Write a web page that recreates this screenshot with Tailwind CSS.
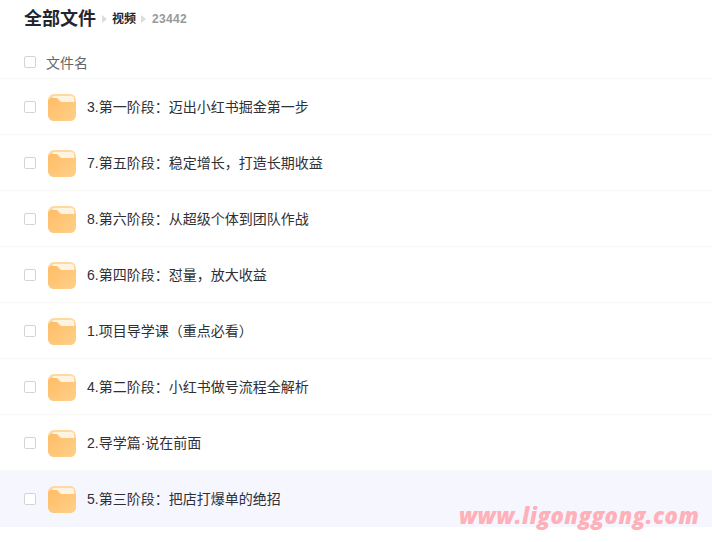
<!DOCTYPE html>
<html lang="zh">
<head>
    <meta charset="UTF-8">
    <title>全部文件</title>
    <script src="https://cdn.jsdelivr.net/npm/@tailwindcss/browser@4"></script>
</head>
<body class="bg-white font-['Liberation_Sans','Noto_Sans_CJK_SC',sans-serif] overflow-hidden">
<div class="relative h-[542px] w-[712px] overflow-hidden">

    <!-- Breadcrumb -->
    <div class="flex h-[37px] items-center pl-[24px]">
        <span class="text-[18px] leading-[24px] font-bold text-[#25262b]">全部文件</span>
        <span class="ml-[6px] mr-[5px] h-0 w-0 border-y-[4px] border-l-[5px] border-y-transparent border-l-[#dcdcdf]"></span>
        <span class="text-[12px] font-bold text-[#25262b]">视频</span>
        <span class="ml-[5px] mr-[5px] h-0 w-0 border-y-[4px] border-l-[5px] border-y-transparent border-l-[#dcdcdf]"></span>
        <span class="ml-[1px] text-[12px] font-bold tracking-[0.3px] text-[#999]">23442</span>
    </div>

    <!-- Table head -->
    <div class="mt-[8px] flex h-[34px] items-center border-b border-[#f7f7f8] pl-[24px]">
        <span class="h-[12px] w-[12px] rounded-[2px] border border-[#d4d4d4] bg-white"></span>
        <span class="ml-[10px] pt-[3px] text-[14px] text-[#666]">文件名</span>
    </div>

    <!-- Rows -->
    <div class="flex h-[56px] items-center border-b border-[#f7f7f8] pl-[24px]">
        <span class="h-[12px] w-[12px] rounded-[2px] border border-[#d4d4d4] bg-white"></span>
        <svg class="ml-[12px]" width="28" height="28" viewBox="0 0 28 28"><defs><linearGradient id="f1" x1="0" y1="0" x2="1" y2="1"><stop offset="0" stop-color="#ffbd66"/><stop offset="1" stop-color="#ffd08a"/></linearGradient></defs><rect y="1" width="28" height="27" rx="6" fill="#ffd89f"/><path d="M5 3h18a3 3 0 0 1 3 3v3H12L9 6H5z" fill="#fff3e2"/><path d="M0 8a4 4 0 0 1 4-3h5l4 4h15v13a6 6 0 0 1-6 6H6a6 6 0 0 1-6-6z" fill="url(#f1)"/></svg>
        <span class="ml-[11px] pt-[1px] text-[14px] text-[#2f3035]">3.第一阶段：迈出小红书掘金第一步</span>
    </div>
    <div class="flex h-[56px] items-center border-b border-[#f7f7f8] pl-[24px]">
        <span class="h-[12px] w-[12px] rounded-[2px] border border-[#d4d4d4] bg-white"></span>
        <svg class="ml-[12px]" width="28" height="28" viewBox="0 0 28 28"><rect y="1" width="28" height="27" rx="6" fill="#ffd89f"/><path d="M5 3h18a3 3 0 0 1 3 3v3H12L9 6H5z" fill="#fff3e2"/><path d="M0 8a4 4 0 0 1 4-3h5l4 4h15v13a6 6 0 0 1-6 6H6a6 6 0 0 1-6-6z" fill="url(#f1)"/></svg>
        <span class="ml-[11px] pt-[1px] text-[14px] text-[#2f3035]">7.第五阶段：稳定增长，打造长期收益</span>
    </div>
    <div class="flex h-[56px] items-center border-b border-[#f7f7f8] pl-[24px]">
        <span class="h-[12px] w-[12px] rounded-[2px] border border-[#d4d4d4] bg-white"></span>
        <svg class="ml-[12px]" width="28" height="28" viewBox="0 0 28 28"><rect y="1" width="28" height="27" rx="6" fill="#ffd89f"/><path d="M5 3h18a3 3 0 0 1 3 3v3H12L9 6H5z" fill="#fff3e2"/><path d="M0 8a4 4 0 0 1 4-3h5l4 4h15v13a6 6 0 0 1-6 6H6a6 6 0 0 1-6-6z" fill="url(#f1)"/></svg>
        <span class="ml-[11px] pt-[1px] text-[14px] text-[#2f3035]">8.第六阶段：从超级个体到团队作战</span>
    </div>
    <div class="flex h-[56px] items-center border-b border-[#f7f7f8] pl-[24px]">
        <span class="h-[12px] w-[12px] rounded-[2px] border border-[#d4d4d4] bg-white"></span>
        <svg class="ml-[12px]" width="28" height="28" viewBox="0 0 28 28"><rect y="1" width="28" height="27" rx="6" fill="#ffd89f"/><path d="M5 3h18a3 3 0 0 1 3 3v3H12L9 6H5z" fill="#fff3e2"/><path d="M0 8a4 4 0 0 1 4-3h5l4 4h15v13a6 6 0 0 1-6 6H6a6 6 0 0 1-6-6z" fill="url(#f1)"/></svg>
        <span class="ml-[11px] pt-[1px] text-[14px] text-[#2f3035]">6.第四阶段：怼量，放大收益</span>
    </div>
    <div class="flex h-[56px] items-center border-b border-[#f7f7f8] pl-[24px]">
        <span class="h-[12px] w-[12px] rounded-[2px] border border-[#d4d4d4] bg-white"></span>
        <svg class="ml-[12px]" width="28" height="28" viewBox="0 0 28 28"><rect y="1" width="28" height="27" rx="6" fill="#ffd89f"/><path d="M5 3h18a3 3 0 0 1 3 3v3H12L9 6H5z" fill="#fff3e2"/><path d="M0 8a4 4 0 0 1 4-3h5l4 4h15v13a6 6 0 0 1-6 6H6a6 6 0 0 1-6-6z" fill="url(#f1)"/></svg>
        <span class="ml-[11px] pt-[1px] text-[14px] text-[#2f3035]">1.项目导学课（重点必看）</span>
    </div>
    <div class="flex h-[56px] items-center border-b border-[#f7f7f8] pl-[24px]">
        <span class="h-[12px] w-[12px] rounded-[2px] border border-[#d4d4d4] bg-white"></span>
        <svg class="ml-[12px]" width="28" height="28" viewBox="0 0 28 28"><rect y="1" width="28" height="27" rx="6" fill="#ffd89f"/><path d="M5 3h18a3 3 0 0 1 3 3v3H12L9 6H5z" fill="#fff3e2"/><path d="M0 8a4 4 0 0 1 4-3h5l4 4h15v13a6 6 0 0 1-6 6H6a6 6 0 0 1-6-6z" fill="url(#f1)"/></svg>
        <span class="ml-[11px] pt-[1px] text-[14px] text-[#2f3035]">4.第二阶段：小红书做号流程全解析</span>
    </div>
    <div class="flex h-[56px] items-center border-b border-[#f7f7f8] pl-[24px]">
        <span class="h-[12px] w-[12px] rounded-[2px] border border-[#d4d4d4] bg-white"></span>
        <svg class="ml-[12px]" width="28" height="28" viewBox="0 0 28 28"><rect y="1" width="28" height="27" rx="6" fill="#ffd89f"/><path d="M5 3h18a3 3 0 0 1 3 3v3H12L9 6H5z" fill="#fff3e2"/><path d="M0 8a4 4 0 0 1 4-3h5l4 4h15v13a6 6 0 0 1-6 6H6a6 6 0 0 1-6-6z" fill="url(#f1)"/></svg>
        <span class="ml-[11px] pt-[1px] text-[14px] text-[#2f3035]">2.导学篇·说在前面</span>
    </div>
    <div class="flex h-[56px] items-center bg-[#f6f6fe] pl-[24px]">
        <span class="h-[12px] w-[12px] rounded-[2px] border border-[#d4d4d4] bg-white"></span>
        <svg class="ml-[12px]" width="28" height="28" viewBox="0 0 28 28"><rect y="1" width="28" height="27" rx="6" fill="#ffd89f"/><path d="M5 3h18a3 3 0 0 1 3 3v3H12L9 6H5z" fill="#fff3e2"/><path d="M0 8a4 4 0 0 1 4-3h5l4 4h15v13a6 6 0 0 1-6 6H6a6 6 0 0 1-6-6z" fill="url(#f1)"/></svg>
        <span class="ml-[11px] pt-[1px] text-[14px] text-[#2f3035]">5.第三阶段：把店打爆单的绝招</span>
    </div>

    <!-- Watermark -->
    <span class="absolute left-[459px] top-[500px] text-[22px] leading-[30px] font-extrabold italic tracking-[0.5px] whitespace-nowrap text-[#ffb0b8] font-['Open_Sans',sans-serif]">www.ligonggong.com</span>
</div>
</body>
</html>
